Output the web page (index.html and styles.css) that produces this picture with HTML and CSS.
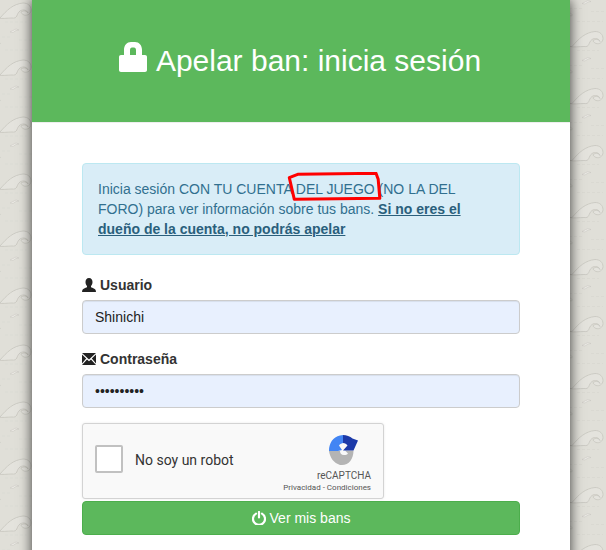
FILE: index.html
```html
<!DOCTYPE html>
<html lang="es">
<head>
  <meta charset="UTF-8">
  <meta name="viewport" content="width=device-width, initial-scale=1.0">
  <title>Apelar ban: inicia sesión</title>
  <link rel="stylesheet" href="styles.css">
</head>
<body>
  <div class="container">
    <div class="banner">
      <h1>
        <svg class="icon-lock" viewBox="0 0 28 30"><path fill="#fff" fill-rule="evenodd" d="M5 13V8C5 3 8 0 12 0h4c4 0 7 3 7 8v5h3c1.200 0 2 .8 2 2v13c0 1.200-.8 2-2 2H2c-1.200 0-2-.8-2-2V15c0-1.200.8-2 2-2zM11 13h6V8c0-1.500-.8-2.500-2-2.500h-2C11.800 5.500 11 6.500 11 8z"/></svg>
        Apelar ban: inicia sesión
      </h1>
    </div>
    <div class="content">
      <div class="alert">
        Inicia sesión CON TU CUENTA DEL JUEGO (NO LA DEL FORO) para ver información sobre tus bans.
        <a href="#">Si no eres el dueño de la cuenta, no podrás apelar</a>
        <svg class="scribble" viewBox="0 0 96 30"><path fill="none" stroke="#f00" stroke-width="3" stroke-linejoin="round" d="M2.300 5.700 10.700 2.300 89 1.300 91.200 7.300 92.800 26.300 7.300 27.300z"/></svg>
      </div>
      <form>
        <div class="form-group">
          <label for="usuario">
            <svg class="icon" viewBox="0 0 14 14"><path fill="#222" d="M7 0c2.300 0 3.500 1.700 3.500 4 0 1.600-.6 3-1.500 3.900v1.300c1.500.7 4.500 1.600 4.700 3.100L14 14H0l.3-1.700c.2-1.500 3.200-2.400 4.700-3.100V7.900C4.100 7 3.500 5.600 3.500 4 3.500 1.700 4.700 0 7 0z"/></svg>
            Usuario
          </label>
          <input id="usuario" type="text" value="Shinichi">
        </div>
        <div class="form-group">
          <label for="clave">
            <svg class="icon" viewBox="0 0 14 12"><path fill="#222" d="M0 0h14L7 6.500zM0 1.500 4.200 5.600 0 10.500zM14 1.500V10.500L9.800 5.600zM5 6.400 7 8.300 9 6.400 14 12H0z"/></svg>
            Contraseña
          </label>
          <input id="clave" type="password" value="contraseña">
        </div>
        <div class="captcha">
          <span class="captcha-check"></span>
          <span class="captcha-label">No soy un robot</span>
          <div class="captcha-brand">
            <svg class="captcha-logo" viewBox="0 0 32 32">
              <path fill="#b4b4b4" d="M1 17H12C12 19 13 21 16 21 18 21 19 20.500 20 19.500L17 16.500H25.500C25.500 25 21 31 14 31H12C6 29 2 24 1 17z"/>
              <path fill="#4285f4" d="M1 17C1 9 5 3 12 1.500L15 1V9C13 9.500 11.500 10.500 11 11.500L14 16 10 17z"/>
              <path fill="#1c3aa9" d="M15 1c3.500 0 7 1.500 9.500 3.500L30 6.500 25.500 16.500H15L19.500 11.500C18.500 10 17 9 15 9z"/>
            </svg>
            <span class="captcha-name">reCAPTCHA</span>
            <span class="captcha-links">Privacidad - Condiciones</span>
          </div>
        </div>
        <button type="submit">
          <svg class="icon-off" viewBox="0 0 14 14"><path fill="none" stroke="#fff" stroke-width="2.200" stroke-linecap="round" d="M4 2.600a6 6 0 1 0 6 0M7 1v5.500"/></svg>
          Ver mis bans
        </button>
      </form>
    </div>
  </div>
</body>
</html>
```

FILE: styles.css
```css
html, body { height: 100%; overflow: hidden; }
body {
  margin: 0;
  font-family: "Liberation Sans", Arial, sans-serif;
  font-size: 14px;
  line-height: 20px;
  color: #333;
  background-color: #e0dfd8;
  background-position: -15px 0;
  background-image: url("data:image/svg+xml,%3Csvg xmlns='http://www.w3.org/2000/svg' width='104' height='57'%3E%3Cdefs%3E%3Cg id='w'%3E%3Cpath d='M15 18C22 10 28 4 38 3c5 0 8 3 8 7 0 4-4 6-7 5-2-1-3-2-3-3 3-2 6-1 7 1-1-3-5-4-8-2-4 3-2 8-8 7-5 0-10 1-14 0z' fill='%23e4e3dd' stroke='%23c6c5be' stroke-width='.8'/%3E%3Cpath d='M25 32l6-3 3 1-3 .5-3 2z' fill='%23eeede8' stroke='%23c4c3bc' stroke-width='.5'/%3E%3Cpath d='M9 43c2-2 5-2 6 0 1 1-1 2-2 1' fill='none' stroke='%23c6c5be' stroke-width='.7'/%3E%3Cpath d='M20 22h22M12 37h14M34 40h22M20 50h26' stroke='%23d6d5ce' stroke-width='.6' stroke-dasharray='3 2'/%3E%3C/g%3E%3C/defs%3E%3Cuse href='%23w'/%3E%3Cuse href='%23w' y='-57'/%3E%3Cuse href='%23w' x='52' y='28.500'/%3E%3Cuse href='%23w' x='52' y='-28.500'/%3E%3C/svg%3E");
}
.container { width: 538px; margin-left: 32px; height: 700px; background: #fff; box-shadow: 0 0 12px rgba(0, 0, 0, .75); }
.banner { height: 122px; display: flex; align-items: center; justify-content: center; background: #5cb85c; border-bottom: 1px solid #eee; }
h1 { margin: 0 2px 2px 0; display: flex; align-items: center; gap: 9px; font-size: 30px; font-weight: 400; line-height: 33px; color: #fff; }
.icon-lock { width: 28px; height: 30px; margin-bottom: 6px; }
.content { padding: 40px 50px; }
.alert { position: relative; margin-bottom: 20px; padding: 15px; border: 1px solid #bce8f1; border-radius: 4px; background: #d9edf7; color: #31708f; }
.alert a { font-weight: 700; color: #2a5f7c; }
.scribble { position: absolute; left: 204px; top: 8px; width: 96px; height: 30px; }
.form-group { margin-bottom: 15px; }
label { display: flex; align-items: center; gap: 4px; margin-bottom: 5px; font-weight: 700; }
.icon { width: 14px; height: 14px; }
input { display: block; box-sizing: border-box; width: 100%; height: 34px; padding: 6px 12px; border: 1px solid #ccc; border-radius: 4px; background: #e8f0fe; box-shadow: inset 0 1px 1px rgba(0, 0, 0, .075); font: inherit; color: #222; }
.captcha { box-sizing: border-box; display: flex; align-items: center; width: 302px; height: 76px; margin-bottom: 2px; padding: 0 12px 4px; border: 1px solid #d3d3d3; border-radius: 3px; background: #f9f9f9; font-family: Roboto, Arial, sans-serif; box-shadow: 0 0 3px rgba(0, 0, 0, .08); }
.captcha-check { box-sizing: border-box; width: 28px; height: 28px; border: 2px solid #c1c1c1; border-radius: 2px; background: #fff; }
.captcha-label { margin: 2px 0 0 12px; font-size: 14px; color: #333; }
.captcha-brand { display: flex; flex-direction: column; align-items: flex-end; align-self: flex-start; margin: 10px 0 0 auto; color: #555; }
.captcha-logo { width: 32px; height: 32px; margin: 0 11px 3px 0; }
.captcha-name { font-size: 10px; line-height: 14px; }
.captcha-links { font-size: 8px; line-height: 10px; }
button { box-sizing: border-box; display: flex; align-items: center; justify-content: center; gap: 4px; width: 100%; height: 34px; padding: 6px 12px; border: 1px solid #4cae4c; border-radius: 4px; background: #5cb85c; color: #fff; font: inherit; }
.icon-off { width: 14px; height: 14px; }
```
